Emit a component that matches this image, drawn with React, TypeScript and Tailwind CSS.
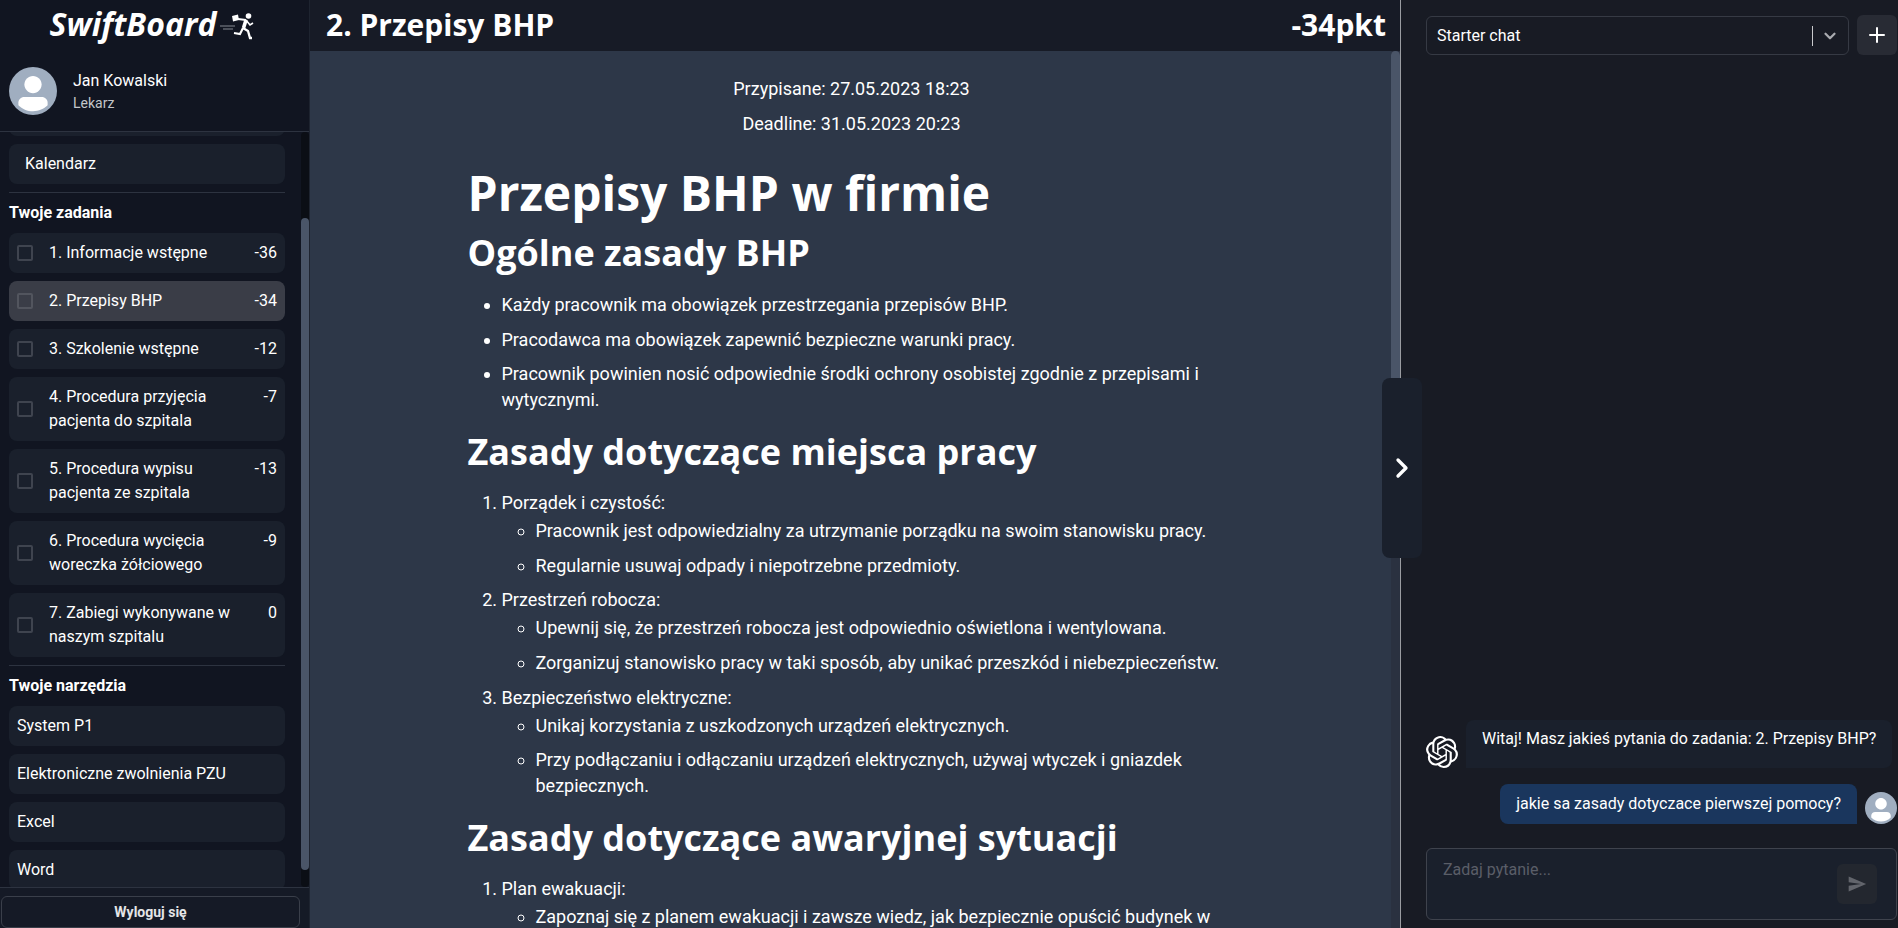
import { SiOpenai } from "react-icons/si";
import { MdSend } from "react-icons/md";
import { ChevronDown, ChevronRight, Plus } from "lucide-react";

const TASKS = [
  { title: "1. Informacje wstępne", points: -36 },
  { title: "2. Przepisy BHP", points: -34, active: true },
  { title: "3. Szkolenie wstępne", points: -12 },
  { title: "4. Procedura przyjęcia pacjenta do szpitala", points: -7 },
  { title: "5. Procedura wypisu pacjenta ze szpitala", points: -13 },
  { title: "6. Procedura wycięcia woreczka żółciowego", points: -9 },
  { title: "7. Zabiegi wykonywane w naszym szpitalu", points: 0 },
];

const TOOLS = ["System P1", "Elektroniczne zwolnienia PZU", "Excel", "Word"];

function Avatar({ className }: { className: string }) {
  return (
    <div className={`${className} shrink-0 overflow-hidden rounded-full bg-[#a0aec0]`}>
      <svg viewBox="0 0 128 128" className="h-full w-full text-white">
        <path fill="currentColor" d="M103,102.1388 C93.094,111.92 79.3504,118 64.1638,118 C48.8056,118 34.9294,111.768 25,101.7892 L25,95.2 C25,86.8096 31.981,80 40.6,80 L87.4,80 C96.019,80 103,86.8096 103,95.2 L103,102.1388 Z" />
        <path fill="currentColor" d="M63.9961647,24 C51.2938136,24 41,34.2938136 41,46.9961647 C41,59.7061864 51.2938136,70 63.9961647,70 C76.6985159,70 87,59.7061864 87,46.9961647 C87,34.2938136 76.6985159,24 63.9961647,24" />
      </svg>
    </div>
  );
}

function RunnerIcon() {
  return (
    <svg viewBox="0 0 36 30" className="mt-[1px] h-[30px] w-[36px]">
      <circle cx="28.5" cy="5" r="2.8" fill="#fff" />
      <path d="M26 9 L23.5 17" stroke="#fff" strokeWidth="3.6" fill="none" />
      <path d="M26 9 L18 8" stroke="#fff" strokeWidth="1.8" fill="none" />
      <path d="M26 9 L30 14 L33 12" stroke="#fff" strokeWidth="1.6" fill="none" />
      <path d="M23 17 L28 20 L30 27 L32 27" stroke="#fff" strokeWidth="2.3" fill="none" />
      <path d="M23 17 L20 23 L14 22" stroke="#fff" strokeWidth="2.1" fill="none" />
      <path d="M12 5 L18 3.5 L19 9 L13 10.5 Z" fill="#fff" />
      <path d="M0 15 H15 M3 18 H13" stroke="#5f636c" strokeWidth="1.5" />
    </svg>
  );
}

function Sidebar() {
  return (
    <aside className="flex h-full w-[309px] shrink-0 flex-col bg-[#111521] text-white">
      <div className="flex h-[51px] shrink-0 items-center justify-center gap-[4px] pr-[3px]">
        <span className="pb-[3px] font-['Open_Sans'] text-[32px] font-bold italic leading-none">SwiftBoard</span>
        <RunnerIcon />
      </div>
      <div className="flex h-[81px] shrink-0 items-center gap-4 border-b border-[#2d3340] pl-[9px]">
        <Avatar className="h-12 w-12" />
        <div>
          <p className="text-[16px] leading-[24px]">Jan Kowalski</p>
          <p className="text-[14px] leading-[20px] text-[#c4c6ca]">Lekarz</p>
        </div>
      </div>
      <div className="flex min-h-0 flex-1">
        <div className="min-w-0 flex-1 overflow-hidden pl-[9px] pr-[16px]">
          <div className="mt-[-36px] flex flex-col gap-2">
            <div className="h-[40px] shrink-0 rounded-lg bg-[#1a202c]" />
            <div className="flex h-[40px] shrink-0 items-center rounded-lg bg-[#1a202c] pl-4 text-[16px]">Kalendarz</div>
            <hr className="border-[#2d3340]" />
            <p className="text-[16px] font-bold leading-[24px]">Twoje zadania</p>
            {TASKS.map(task => (
              <div
                key={task.title}
                className={`flex items-center rounded-lg py-2 pl-2 pr-2 text-[16px] leading-[24px] ${task.active ? "bg-[#3a3d47]" : "bg-[#1a202c]"}`}
              >
                <span className={`h-4 w-4 shrink-0 rounded-[2px] border-2 ${task.active ? "border-[#52555e]" : "border-[#3f444f]"}`} />
                <span className="ml-4 min-w-0 flex-1">{task.title}</span>
                <span className="ml-2 self-start">{task.points}</span>
              </div>
            ))}
            <hr className="border-[#2d3340]" />
            <p className="text-[16px] font-bold leading-[24px]">Twoje narzędzia</p>
            {TOOLS.map(tool => (
              <div key={tool} className="flex h-[40px] shrink-0 items-center rounded-lg bg-[#1a202c] pl-2 text-[16px]">{tool}</div>
            ))}
          </div>
        </div>
        <div className="w-[8px] shrink-0 rounded-full bg-[#0b0e15]">
          <div className="mt-[86px] h-[652px] rounded-full bg-[#4a5568]" />
        </div>
      </div>
      <div className="h-[41px] shrink-0 border-t border-[#2d3340] bg-[#151a26] pl-[1px] pr-[9px] pt-[8px]">
        <button className="h-[32px] w-full rounded-md border border-[#3a3f4a] text-[14px] font-bold text-[#e4e5e7]">Wyloguj się</button>
      </div>
    </aside>
  );
}

function Content() {
  const li = "mb-[8.6px] leading-[26px]";
  const h2 = "mt-[16px] font-['Open_Sans'] text-[36px] font-bold leading-[46px]";
  return (
    <div className="mx-auto w-[768px] pb-10 text-[18px] text-white">
      <p className="mt-[20px] text-center leading-[35px]">Przypisane: 27.05.2023 18:23</p>
      <p className="text-center leading-[35px]">Deadline: 31.05.2023 20:23</p>
      <h1 className="mb-[7px] mt-[22px] font-['Open_Sans'] text-[48px] font-bold leading-[60px]">Przepisy BHP w firmie</h1>
      <h2 className="font-['Open_Sans'] text-[36px] font-bold leading-[46px]">Ogólne zasady BHP</h2>
      <ul className="mt-[16px] list-disc pl-[34px]">
        <li className={li}>Każdy pracownik ma obowiązek przestrzegania przepisów BHP.</li>
        <li className={li}>Pracodawca ma obowiązek zapewnić bezpieczne warunki pracy.</li>
        <li className={li}>Pracownik powinien nosić odpowiednie środki ochrony osobistej zgodnie z przepisami i wytycznymi.</li>
      </ul>
      <h2 className={h2}>Zasady dotyczące miejsca pracy</h2>
      <ol className="mt-[15px] list-decimal pl-[34px]">
        <li className="leading-[26px]">
          Porządek i czystość:
          <ul className="mt-[2px] list-[circle] pl-[34px]">
            <li className={li}>Pracownik jest odpowiedzialny za utrzymanie porządku na swoim stanowisku pracy.</li>
            <li className={li}>Regularnie usuwaj odpady i niepotrzebne przedmioty.</li>
          </ul>
        </li>
        <li className="leading-[26px]">
          Przestrzeń robocza:
          <ul className="mt-[2px] list-[circle] pl-[34px]">
            <li className={li}>Upewnij się, że przestrzeń robocza jest odpowiednio oświetlona i wentylowana.</li>
            <li className={li}>Zorganizuj stanowisko pracy w taki sposób, aby unikać przeszkód i niebezpieczeństw.</li>
          </ul>
        </li>
        <li className="leading-[26px]">
          Bezpieczeństwo elektryczne:
          <ul className="mt-[2px] list-[circle] pl-[34px]">
            <li className={li}>Unikaj korzystania z uszkodzonych urządzeń elektrycznych.</li>
            <li className={li}>Przy podłączaniu i odłączaniu urządzeń elektrycznych, używaj wtyczek i gniazdek bezpiecznych.</li>
          </ul>
        </li>
      </ol>
      <h2 className={h2}>Zasady dotyczące awaryjnej sytuacji</h2>
      <ol className="mt-[15px] list-decimal pl-[34px]">
        <li className="leading-[26px]">
          Plan ewakuacji:
          <ul className="mt-[2px] list-[circle] pl-[34px]">
            <li className={li}>Zapoznaj się z planem ewakuacji i zawsze wiedz, jak bezpiecznie opuścić budynek w razie potrzeby.</li>
          </ul>
        </li>
      </ol>
    </div>
  );
}

function Main() {
  return (
    <main className="relative flex h-full min-w-0 flex-1 flex-col border-l border-r border-l-[#1e2430] border-r-[#9a9ca1] bg-[#2d3748]">
      <header className="flex h-[51px] shrink-0 items-center justify-between bg-[#171b26] pb-[2px] pl-[16px] pr-[14px] font-['Open_Sans'] text-[30px] font-bold text-white">
        <span>2. Przepisy BHP</span>
        <span>-34pkt</span>
      </header>
      <div className="flex min-h-0 flex-1">
        <div className="min-w-0 flex-1 overflow-hidden pl-[2px]">
          <Content />
        </div>
        <div className="w-[9px] shrink-0 bg-[#2a3140]">
          <div className="h-[420px] rounded-full bg-[#4a5568]" />
        </div>
      </div>
      <button className="absolute right-[-22px] top-[378px] z-10 flex h-[180px] w-[40px] items-center justify-center rounded-lg bg-[#1a202c] text-white">
        <ChevronRight size={32} strokeWidth={2.5} />
      </button>
    </main>
  );
}

function Chat() {
  return (
    <section className="flex h-full w-[497px] shrink-0 flex-col bg-[#181b24] pb-2 pl-[25px] text-white">
      <div className="mt-[15px] flex items-start gap-2">
        <div className="mt-[1px] flex h-[39px] w-[423px] items-center rounded-md border border-[#363a44] pl-[10px] pr-2 text-[16px]">
          <span className="flex-1">Starter chat</span>
          <span className="mr-2 h-5 w-px bg-[#c9cacd]" />
          <ChevronDown size={18} strokeWidth={3} className="mr-[1px] text-[#a9abb0]" />
        </div>
        <button className="flex h-10 w-10 items-center justify-center rounded-md bg-[#282b34] text-white">
          <Plus size={24} strokeWidth={2} />
        </button>
      </div>
      <div className="flex min-h-0 flex-1 flex-col justify-end gap-4 pr-[1px]">
        <div className="flex items-end gap-2">
          <SiOpenai className="h-8 w-8 shrink-0" />
          <div className="mr-[5px] h-[48px] flex-1 whitespace-nowrap rounded-t-lg rounded-br-lg bg-[#1a202c] px-4 pt-[7px] text-[16px] leading-[24px]">
            Witaj! Masz jakieś pytania do zadania: 2. Przepisy BHP?
          </div>
        </div>
        <div className="flex items-end justify-end gap-2">
          <div className="flex h-[40px] items-center rounded-t-lg rounded-bl-lg bg-[#1a365d] px-4 text-[16px]">
            jakie sa zasady dotyczace pierwszej pomocy?
          </div>
          <Avatar className="h-8 w-8" />
        </div>
      </div>
      <div className="mr-[1px] mt-6 flex h-[72px] shrink-0 justify-between rounded-md border border-[#3f434d] bg-[#1a202c] pl-[16px] pr-[19px]">
        <span className="pt-[9px] text-[16px] text-[#5a5e68]">Zadaj pytanie...</span>
        <button className="mt-[15px] flex h-10 w-10 items-center justify-center rounded-md bg-[#23272f] text-[#62656c]">
          <MdSend size={20} />
        </button>
      </div>
    </section>
  );
}

export default function App() {
  return (
    <div className="flex h-[928px] w-[1898px] overflow-hidden font-['Roboto',sans-serif]">
      <Sidebar />
      <Main />
      <Chat />
    </div>
  );
}
